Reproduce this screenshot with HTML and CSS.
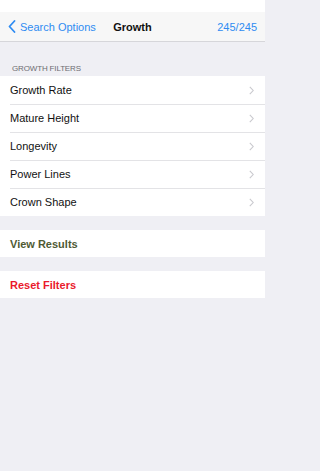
FILE: index.html
```html
<!DOCTYPE html>
<html>
<head>
<meta charset="utf-8">
<link rel="stylesheet" href="styles.css">
</head>
<body>
<div class="status"></div>
<div class="nav">
  <div class="back">
    <svg class="back-icon" width="8" height="13" viewBox="0 0 8 13"><path d="M6.5 1 L1.5 6.5 L6.5 12" fill="none" stroke="#2f8cf2" stroke-width="1.8" stroke-linecap="round" stroke-linejoin="round"/></svg>
    <span>Search Options</span>
  </div>
  <div class="title">Growth</div>
  <div class="count">245/245</div>
</div>
<div class="section-header">GROWTH FILTERS</div>
<div class="group">
  <div class="row"><span>Growth Rate</span><svg class="chev" width="5" height="9" viewBox="0 0 5 9"><path d="M0.8 0.8 L4.2 4.5 L0.8 8.2" fill="none" stroke="#c9c9ce" stroke-width="1.1"/></svg></div>
  <div class="row"><span>Mature Height</span><svg class="chev" width="5" height="9" viewBox="0 0 5 9"><path d="M0.8 0.8 L4.2 4.5 L0.8 8.2" fill="none" stroke="#c9c9ce" stroke-width="1.1"/></svg></div>
  <div class="row"><span>Longevity</span><svg class="chev" width="5" height="9" viewBox="0 0 5 9"><path d="M0.8 0.8 L4.2 4.5 L0.8 8.2" fill="none" stroke="#c9c9ce" stroke-width="1.1"/></svg></div>
  <div class="row"><span>Power Lines</span><svg class="chev" width="5" height="9" viewBox="0 0 5 9"><path d="M0.8 0.8 L4.2 4.5 L0.8 8.2" fill="none" stroke="#c9c9ce" stroke-width="1.1"/></svg></div>
  <div class="row"><span>Crown Shape</span><svg class="chev" width="5" height="9" viewBox="0 0 5 9"><path d="M0.8 0.8 L4.2 4.5 L0.8 8.2" fill="none" stroke="#c9c9ce" stroke-width="1.1"/></svg></div>
</div>
<div class="group action">
  <div class="row view">View Results</div>
</div>
<div class="group action">
  <div class="row reset">Reset Filters</div>
</div>
</body>
</html>
```
FILE: styles.css
```css
html, body {
  margin: 0;
  padding: 0;
}
body {
  width: 265px;
  height: 471px;
  background: #efeff4;
  font-family: "Liberation Sans", Arial, sans-serif;
  color: #111;
  overflow: hidden;
}
.status {
  height: 12px;
  background: #ffffff;
}
.nav {
  height: 29px;
  background: #f7f7f7;
  border-bottom: 1px solid #d6d6da;
  display: flex;
  align-items: center;
  position: relative;
  padding: 0 8px;
  font-size: 11px;
}
.back {
  display: flex;
  align-items: center;
  gap: 4px;
  color: #2f8cf2;
}
.title {
  position: absolute;
  left: 0;
  right: 0;
  text-align: center;
  font-weight: bold;
  pointer-events: none;
}
.count {
  margin-left: auto;
  color: #2f8cf2;
}
.section-header {
  padding: 22px 12px 3px;
  font-size: 8px;
  letter-spacing: -0.15px;
  color: #6d6d72;
  line-height: 9px;
}
.group {
  background: #fff;
}
.row {
  height: 28px;
  display: flex;
  align-items: center;
  justify-content: space-between;
  padding: 0 11px 0 10px;
  font-size: 11px;
  position: relative;
}
.row + .row::before {
  content: "";
  position: absolute;
  left: 10px;
  right: 0;
  top: 0;
  border-top: 1px solid #e3e3e6;
}
.action {
  margin-top: 14px;
}
.action .row {
  height: 27px;
  font-weight: bold;
}
.view {
  color: #4f5a34;
}
.reset {
  color: #ea1a2c;
}
```
